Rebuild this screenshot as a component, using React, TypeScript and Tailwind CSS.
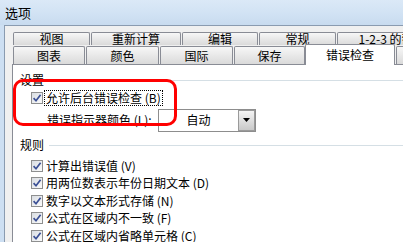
import React from 'react';

const font = "font-['Noto_Sans_CJK_SC','Noto_Sans_CJK_JP',sans-serif]";

const Tab: React.FC<{ label: string; w: string; ml?: string }> = ({ label, w, ml = 'ml-px' }) => (
  <div
    className={`${w} ${ml} h-full shrink-0 flex items-center justify-center whitespace-nowrap border border-b-0 border-[#898c95] rounded-t-[2px] bg-gradient-to-b from-[#f7f7f7] to-[#dadada] text-[12px] leading-none`}
  >
    {label}
  </div>
);

const CheckBox: React.FC = () => (
  <div className="w-[12px] h-[12px] shrink-0 border border-[#8e8f8f] bg-gradient-to-br from-[#d9dde2] to-[#fbfbfb] flex items-center justify-center">
    <svg width="10" height="10" viewBox="0 0 10 10">
      <path d="M1.6 5.2 L4 7.8 L8.6 1.8" fill="none" stroke="#3a4f95" strokeWidth="1.7" />
    </svg>
  </div>
);

const GroupHeader: React.FC<{ title: string }> = ({ title }) => (
  <div className="h-[16px] flex items-center pl-[7px]">
    <span className="leading-none">{title}</span>
    <div className="flex-1 h-px bg-[#d5dfe5] ml-[5px]" />
  </div>
);

const rules = [
  '计算出错误值 (V)',
  '用两位数表示年份日期文本 (D)',
  '数字以文本形式存储 (N)',
  '公式在区域内不一致 (F)',
  '公式在区域内省略单元格 (C)',
];

export default function App() {
  return (
    <div className={`relative w-[403px] h-[242px] overflow-hidden bg-[#cddff2] text-black text-[12px] ${font}`}>
      {/* title bar */}
      <div className="h-[25px] flex items-center pl-[5px] text-[13px] bg-gradient-to-b from-[#dbe9f7] via-[#d2e3f4] to-[#c8dbef]">
        选项
      </div>

      {/* dialog body */}
      <div className="ml-[4px] h-[217px] border-l border-t border-[#8a9bb0] bg-[#f0f0f0] pl-[7px] pt-[6px] flex flex-col">
        {/* tab row 1 */}
        <div className="flex h-[17px] overflow-visible">
          <Tab label="视图" w="w-[77px]" />
          <Tab label="重新计算" w="w-[90px]" />
          <Tab label="编辑" w="w-[76px]" />
          <Tab label="常规" w="w-[77px]" />
          <Tab label="1-2-3 的帮助" w="w-[110px]" />
        </div>

        {/* tab row 2 */}
        <div className="flex items-end h-[18px] mt-px">
          <Tab label="图表" w="w-[72px]" />
          <Tab label="颜色" w="w-[73px]" />
          <Tab label="国际" w="w-[73px]" />
          <Tab label="保存" w="w-[71px]" />
          <div className="relative z-10 w-[90px] h-[21px] -mb-px shrink-0 flex items-center justify-center border border-b-0 border-[#898c95] rounded-t-[2px] bg-white leading-none">
            错误检查
          </div>
          <Tab label="" w="w-[40px]" />
        </div>

        {/* panel */}
        <div className="flex-1 bg-white border-l border-t border-[#898c95] pt-[7px]">
          <GroupHeader title="设置" />

          <div className="h-[16px] mt-[2px] flex items-center pl-[18px]">
            <CheckBox />
            <span className="ml-[1px] px-[1px] h-[16px] flex items-center border border-dotted border-black leading-none">
              允许后台错误检查 (B)
            </span>
          </div>

          <div className="h-[24px] mt-[2px] flex items-center pl-[34px]">
            <span className="w-[111px] leading-none">错误指示器颜色 (L):</span>
            <div className="w-[98px] h-[23px] flex items-center border border-[#8d8d8d] bg-white">
              <span className="flex-1 text-center leading-none">自动</span>
              <div className="w-[17px] h-[21px] border border-[#9a9a9a] bg-gradient-to-b from-[#f4f4f4] to-[#c9c9c9] flex items-center justify-center">
                <svg width="7" height="4" viewBox="0 0 7 4">
                  <path d="M0 0 H7 L3.5 4 Z" fill="#000" />
                </svg>
              </div>
            </div>
          </div>

          <div className="mt-[5px]">
            <GroupHeader title="规则" />
          </div>

          <div className="mt-[4px] flex flex-col">
            {rules.map((r) => (
              <div key={r} className="h-[17.5px] flex items-center pl-[18px]">
                <CheckBox />
                <span className="ml-[3px] leading-none whitespace-nowrap">{r}</span>
              </div>
            ))}
          </div>
        </div>
      </div>

      {/* red highlight */}
      <div className="absolute left-[13px] top-[79px] w-[164px] h-[47px] border-[3px] border-[#ff0000] rounded-[10px] z-20" />
    </div>
  );
}
